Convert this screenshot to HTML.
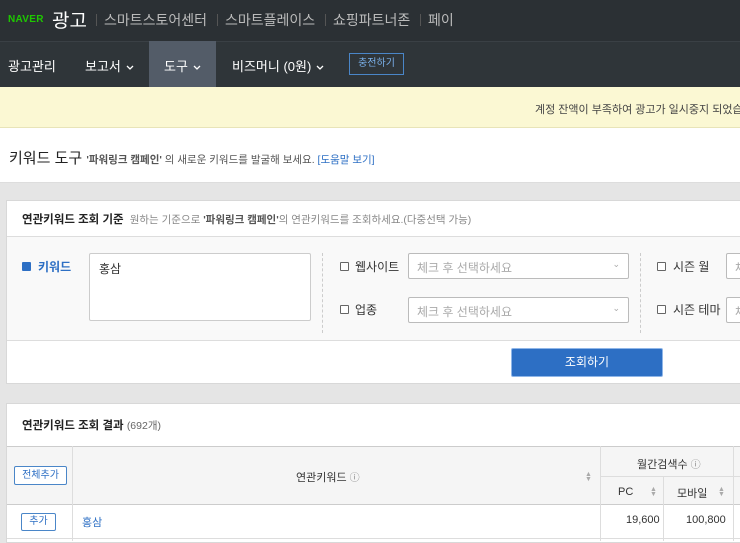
<!DOCTYPE html>
<html><head><meta charset="utf-8"><style>
*{margin:0;padding:0;box-sizing:border-box}
body{width:740px;height:541px;overflow:hidden;position:relative;background:#e5e5e5;font-family:"Liberation Sans","Noto Sans CJK KR",sans-serif;color:#333}
.a{position:absolute;white-space:nowrap}
.cb{position:absolute;width:9px;height:9px;border:1px solid #666;border-radius:1px;background:#fff}
.sel{position:absolute;height:26px;border:1px solid #bbb;border-radius:2px;background:#fff;font-size:12px;color:#aaa;padding:5px 8px}
.sort{position:absolute;font-size:7px;color:#aaa;line-height:5px}
.chev{display:inline-block;width:8px;height:5px;margin-left:5px;vertical-align:middle}
</style></head><body>
<div class="a" style="left:0;top:0;width:740px;height:41px;background:#2b3034"></div>
<div class="a" style="left:8px;top:14px;font-size:10px;font-weight:900;color:#1ec800;letter-spacing:0.3px">NAVER</div>
<div class="a" style="left:52px;top:6px;font-size:19px;color:#fff">광고</div>
<div class="a" style="left:96px;top:14px;width:1px;height:12px;background:#555"></div>
<div class="a" style="left:104px;top:10px;font-size:14px;color:#bbb">스마트스토어센터</div>
<div class="a" style="left:217px;top:14px;width:1px;height:12px;background:#555"></div>
<div class="a" style="left:225px;top:10px;font-size:14px;color:#bbb">스마트플레이스</div>
<div class="a" style="left:325px;top:14px;width:1px;height:12px;background:#555"></div>
<div class="a" style="left:333px;top:10px;font-size:14px;color:#bbb">쇼핑파트너존</div>
<div class="a" style="left:420px;top:14px;width:1px;height:12px;background:#555"></div>
<div class="a" style="left:428px;top:10px;font-size:14px;color:#bbb">페이</div>
<div class="a" style="left:0;top:41px;width:740px;height:46px;background:#2f3539;border-top:1px solid #3a4045"></div>
<div class="a" style="left:149px;top:41px;width:67px;height:46px;background:#535c68"></div>
<div class="a" style="left:8px;top:56px;font-size:13px;color:#fff">광고관리</div>
<div class="a" style="left:85px;top:56px;font-size:13px;color:#fff">보고서<svg class="chev" viewBox="0 0 8 5"><path d="M1 1l3 3 3-3" stroke="#fff" stroke-width="1.3" fill="none"/></svg></div>
<div class="a" style="left:164px;top:56px;font-size:13px;color:#fff">도구<svg class="chev" viewBox="0 0 8 5"><path d="M1 1l3 3 3-3" stroke="#fff" stroke-width="1.3" fill="none"/></svg></div>
<div class="a" style="left:232px;top:56px;font-size:13px;color:#fff">비즈머니 (0원)<svg class="chev" viewBox="0 0 8 5"><path d="M1 1l3 3 3-3" stroke="#fff" stroke-width="1.3" fill="none"/></svg></div>
<div class="a" style="left:349px;top:53px;width:55px;height:22px;border:1px solid #4a86c8;font-size:10px;color:#7ab0ea;text-align:center;line-height:20px">충전하기</div>
<div class="a" style="left:0;top:87px;width:740px;height:41px;background:#fbf8d3;border-bottom:1px solid #e8e4b8"></div>
<div class="a" style="left:535px;top:101px;font-size:11px;color:#444">계정 잔액이 부족하여 광고가 일시중지 되었습</div>
<div class="a" style="left:0;top:128px;width:740px;height:55px;background:#fff;border-bottom:1px solid #ddd"></div>
<div class="a" style="left:9px;top:147px;font-size:15px;color:#222">키워드 도구 <span style="font-size:10.5px;color:#555"><b>'파워링크 캠페인'</b> 의 새로운 키워드를 발굴해 보세요. <span style="color:#2d6fc4">[도움말 보기]</span></span></div>
<div class="a" style="left:6px;top:200px;width:740px;height:184px;background:#fff;border:1px solid #d8d8d8"></div>
<div class="a" style="left:22px;top:211px;font-size:11.5px;color:#222"><b>연관키워드 조회 기준</b> <span style="font-size:10.5px;color:#888">&nbsp;원하는 기준으로 <b style="color:#555">'파워링크 캠페인'</b>의 연관키워드를 조회하세요.(다중선택 가능)</span></div>
<div class="a" style="left:7px;top:236px;width:740px;height:105px;background:#f9f9f9;border-top:1px solid #ddd;border-bottom:1px solid #ddd"></div>
<div class="a" style="left:22px;top:262px;width:9px;height:9px;background:#2d6fc4;border-radius:1px"></div>
<div class="a" style="left:38px;top:258px;font-size:12px;font-weight:bold;color:#2d6fc4">키워드</div>
<div class="a" style="left:89px;top:253px;width:222px;height:68px;background:#fff;border:1px solid #ccc;border-radius:2px;font-size:12px;padding:6px 9px">홍삼</div>
<div class="a" style="left:322px;top:253px;height:80px;border-left:1px dashed #ccc"></div>
<div class="cb" style="left:340px;top:262px"></div>
<div class="a" style="left:355px;top:258px;font-size:12px">웹사이트</div>
<div class="sel" style="left:408px;top:253px;width:221px">체크 후 선택하세요<span style="position:absolute;right:8px;font-size:9px">⌄</span></div>
<div class="cb" style="left:340px;top:305px"></div>
<div class="a" style="left:355px;top:301px;font-size:12px">업종</div>
<div class="sel" style="left:408px;top:297px;width:221px">체크 후 선택하세요<span style="position:absolute;right:8px;font-size:9px">⌄</span></div>
<div class="a" style="left:640px;top:253px;height:80px;border-left:1px dashed #ccc"></div>
<div class="cb" style="left:657px;top:262px"></div>
<div class="a" style="left:673px;top:258px;font-size:12px">시즌 월</div>
<div class="sel" style="left:726px;top:253px;width:40px">체</div>
<div class="cb" style="left:657px;top:305px"></div>
<div class="a" style="left:673px;top:301px;font-size:12px">시즌 테마</div>
<div class="sel" style="left:726px;top:297px;width:40px">체</div>
<div class="a" style="left:511px;top:348px;width:152px;height:29px;background:#2d6fc4;border:1px solid #8fb6e8;border-radius:2px;color:#fff;font-size:12px;text-align:center;line-height:27px">조회하기</div>
<div class="a" style="left:6px;top:403px;width:740px;height:140px;background:#fff;border:1px solid #d8d8d8"></div>
<div class="a" style="left:22px;top:417px;font-size:11.5px;color:#222"><b>연관키워드 조회 결과</b> <span style="font-size:10.5px;color:#666">(692개)</span></div>
<div class="a" style="left:7px;top:446px;width:740px;height:59px;background:#f5f5f5;border-top:1px solid #ccc;border-bottom:1px solid #ccc"></div>
<div class="a" style="left:72px;top:446px;height:95px;border-left:1px solid #ddd"></div>
<div class="a" style="left:600px;top:446px;height:95px;border-left:1px solid #ddd"></div>
<div class="a" style="left:663px;top:476px;height:65px;border-left:1px solid #ddd"></div>
<div class="a" style="left:733px;top:446px;height:95px;border-left:1px solid #ddd"></div>
<div class="a" style="left:600px;top:476px;width:140px;border-top:1px solid #ddd"></div>
<div class="a" style="left:14px;top:466px;width:53px;height:19px;border:1px solid #4a86c8;border-radius:2px;background:#fff;font-size:10px;color:#2d6fc4;text-align:center;line-height:17px">전체추가</div>
<div class="a" style="left:296px;top:469px;font-size:11px">연관키워드 <span style="font-size:10px;color:#888">ⓘ</span></div>
<div class="sort" style="left:585px;top:472px">▲<br>▼</div>
<div class="a" style="left:637px;top:456px;font-size:11px">월간검색수 <span style="font-size:10px;color:#888">ⓘ</span></div>
<div class="a" style="left:618px;top:486px;font-size:11px">PC</div>
<div class="sort" style="left:650px;top:487px">▲<br>▼</div>
<div class="a" style="left:677px;top:485px;font-size:11px">모바일</div>
<div class="sort" style="left:718px;top:487px">▲<br>▼</div>
<div class="a" style="left:7px;top:538px;width:740px;border-top:1px solid #ddd"></div>
<div class="a" style="left:21px;top:513px;width:35px;height:18px;border:1px solid #4a86c8;border-radius:2px;background:#fff;font-size:10px;color:#2d6fc4;text-align:center;line-height:16px">추가</div>
<div class="a" style="left:82px;top:514px;font-size:11px;color:#2d6fc4">홍삼</div>
<div class="a" style="left:626px;top:514px;font-size:11px">19,600</div>
<div class="a" style="left:686px;top:514px;font-size:11px">100,800</div>
</body></html>
